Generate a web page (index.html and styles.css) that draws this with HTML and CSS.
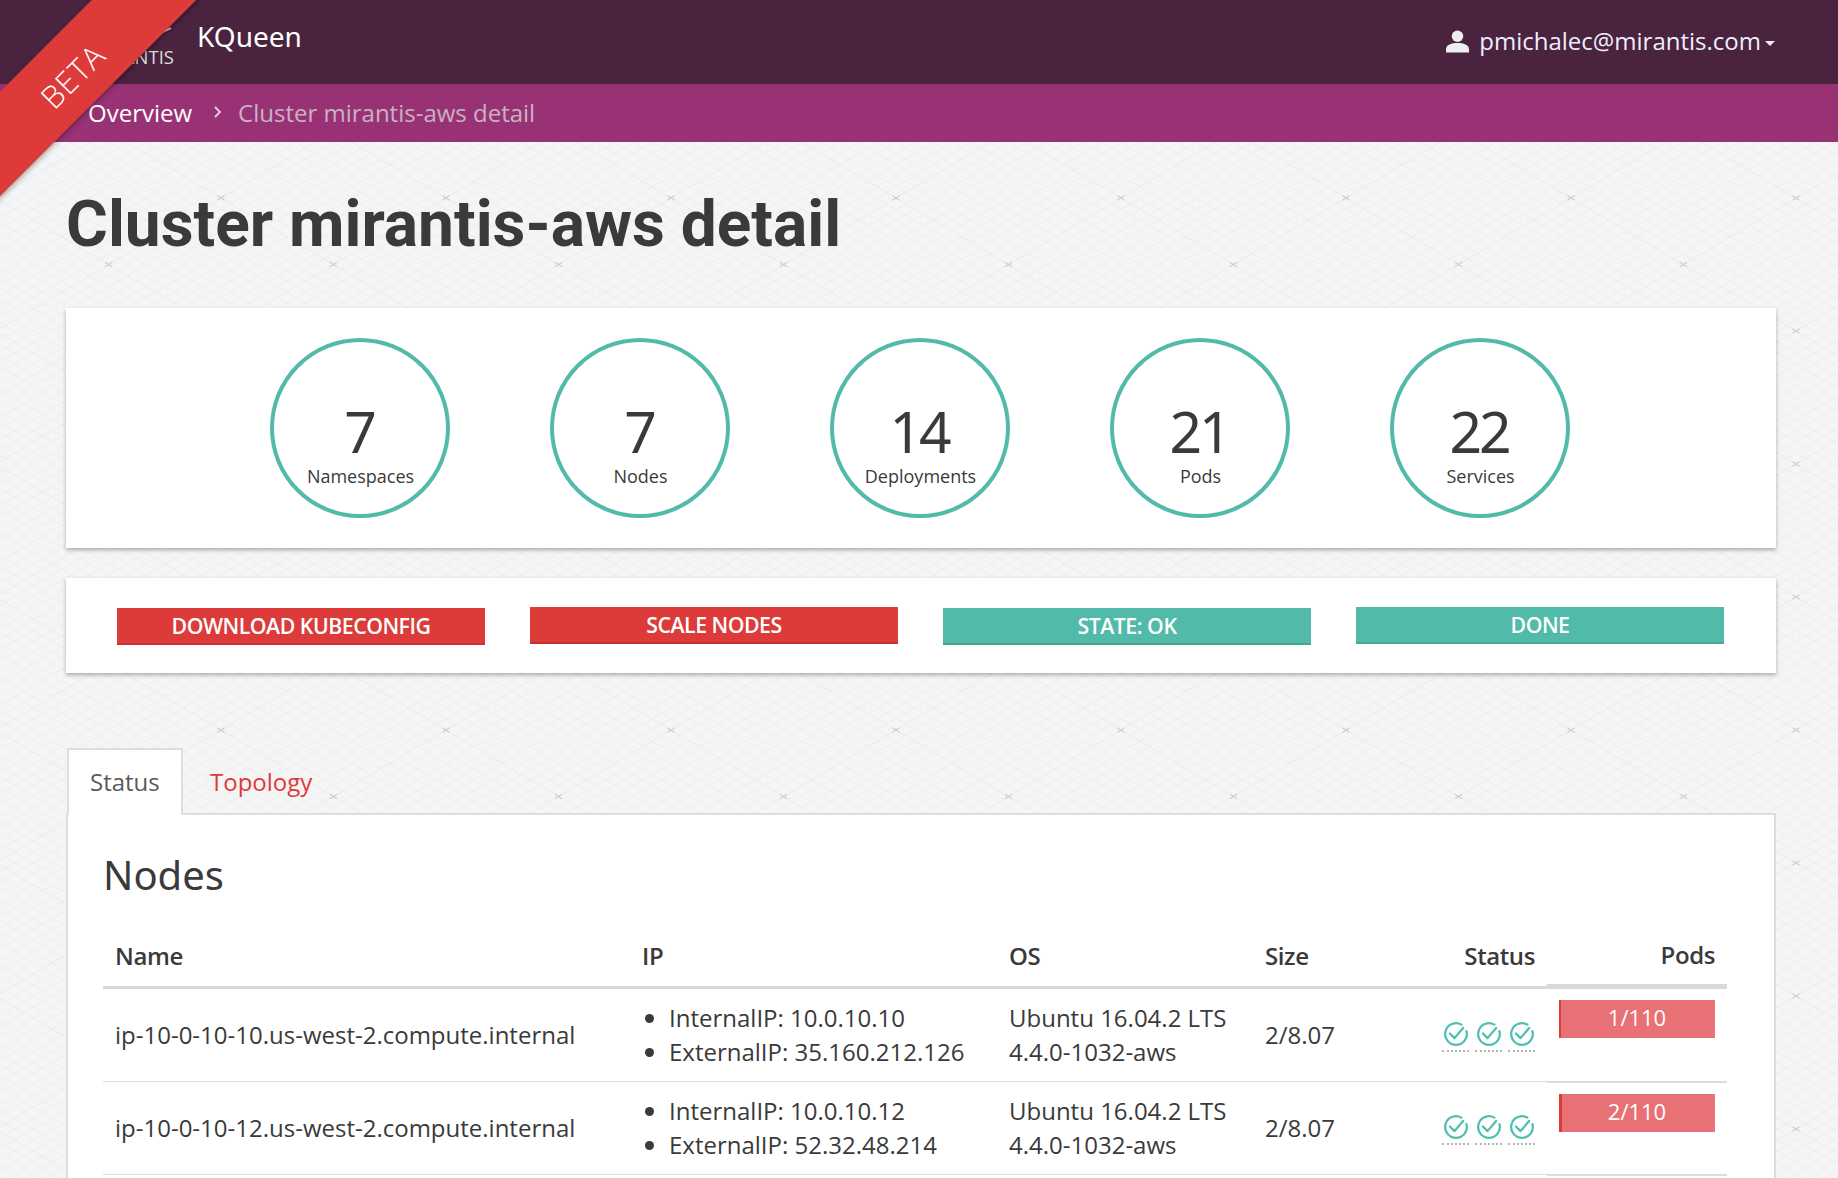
FILE: index.html
```html
<!DOCTYPE html>
<html lang="en">
<head>
<meta charset="utf-8">
<title>KQueen - Cluster mirantis-aws detail</title>
<link rel="stylesheet" href="styles.css">
</head>
<body>
<div class="ribbon"><span>BETA</span></div>
<header class="topbar">
  <a class="logo">
    <svg class="logo-mark" viewBox="0 0 90 30"><path d="M79 17 L87 13" fill="none" stroke="#ddd" stroke-width="1.5"/></svg>
    <span class="logo-text">MIRANTIS</span>
  </a>
  <a class="brand">KQueen</a>
  <div class="user">
    <svg class="user-icon" viewBox="0 0 24 24"><circle cx="12" cy="6.5" r="6"/><path d="M0 23.5 V20 C0 15.5 6 13.6 12 13.6 S24 15.5 24 20 V23.5 Z"/></svg>
    <span>pmichalec@mirantis.com</span>
    <i class="caret"></i>
  </div>
</header>
<nav class="crumbs">
  <a class="crumb-link">Overview</a>
  <svg class="crumb-sep" viewBox="0 0 10 14"><path d="M2 2 L7 7 L2 12" fill="none" stroke="#e6d3e0" stroke-width="1.8"/></svg>
  <span class="crumb-current">Cluster mirantis-aws detail</span>
</nav>
<main class="page">
  <h1 class="title">Cluster mirantis-aws detail</h1>
  <section class="card stats">
    <div class="stat"><strong>7</strong><span>Namespaces</span></div>
    <div class="stat"><strong>7</strong><span>Nodes</span></div>
    <div class="stat"><strong>14</strong><span>Deployments</span></div>
    <div class="stat"><strong>21</strong><span>Pods</span></div>
    <div class="stat"><strong>22</strong><span>Services</span></div>
  </section>
  <section class="card actions">
    <a class="btn btn-red">DOWNLOAD KUBECONFIG</a>
    <a class="btn btn-red btn-up">SCALE NODES</a>
    <a class="btn btn-teal">STATE: OK</a>
    <a class="btn btn-teal btn-up">DONE</a>
  </section>
  <div class="tabs">
    <a class="tab tab-active">Status</a>
    <a class="tab">Topology</a>
  </div>
  <section class="panel">
    <h2 class="panel-title">Nodes</h2>
    <table class="nodes">
      <colgroup>
        <col class="c-name"><col class="c-ip"><col class="c-os"><col class="c-size"><col class="c-status"><col class="c-pods">
      </colgroup>
      <thead>
        <tr><th>Name</th><th>IP</th><th>OS</th><th>Size</th><th class="right">Status</th><th class="right pods-col">Pods</th></tr>
      </thead>
      <tbody>
        <tr>
          <td>ip-10-0-10-10.us-west-2.compute.internal</td>
          <td><ul class="ips"><li>InternalIP: 10.0.10.10</li><li>ExternalIP: 35.160.212.126</li></ul></td>
          <td>Ubuntu 16.04.2 LTS<br>4.4.0-1032-aws</td>
          <td>2/8.07</td>
          <td class="right checks">
            <span class="check"><svg viewBox="-12 -12 24 24"><path d="M5 -8.66 A10 10 0 1 0 9.66 -2.6 M-5.6 -.4 L-1.4 3.8 L6.6 -5.6"/></svg></span>
            <span class="check"><svg viewBox="-12 -12 24 24"><path d="M5 -8.66 A10 10 0 1 0 9.66 -2.6 M-5.6 -.4 L-1.4 3.8 L6.6 -5.6"/></svg></span>
            <span class="check"><svg viewBox="-12 -12 24 24"><path d="M5 -8.66 A10 10 0 1 0 9.66 -2.6 M-5.6 -.4 L-1.4 3.8 L6.6 -5.6"/></svg></span>
          </td>
          <td class="pods-col"><div class="bar"><div class="bar-fill" style="width:1%"></div><span>1/110</span></div></td>
        </tr>
        <tr>
          <td>ip-10-0-10-12.us-west-2.compute.internal</td>
          <td><ul class="ips"><li>InternalIP: 10.0.10.12</li><li>ExternalIP: 52.32.48.214</li></ul></td>
          <td>Ubuntu 16.04.2 LTS<br>4.4.0-1032-aws</td>
          <td>2/8.07</td>
          <td class="right checks">
            <span class="check"><svg viewBox="-12 -12 24 24"><path d="M5 -8.66 A10 10 0 1 0 9.66 -2.6 M-5.6 -.4 L-1.4 3.8 L6.6 -5.6"/></svg></span>
            <span class="check"><svg viewBox="-12 -12 24 24"><path d="M5 -8.66 A10 10 0 1 0 9.66 -2.6 M-5.6 -.4 L-1.4 3.8 L6.6 -5.6"/></svg></span>
            <span class="check"><svg viewBox="-12 -12 24 24"><path d="M5 -8.66 A10 10 0 1 0 9.66 -2.6 M-5.6 -.4 L-1.4 3.8 L6.6 -5.6"/></svg></span>
          </td>
          <td class="pods-col"><div class="bar"><div class="bar-fill" style="width:2%"></div><span>2/110</span></div></td>
        </tr>
        <tr class="row-more"><td></td><td></td><td></td><td></td><td></td><td class="pods-col"></td></tr>
      </tbody>
    </table>
  </section>
</main>
</body>
</html>
```
FILE: styles.css
```css
* { box-sizing: border-box; }
html, body { height: 100%; margin: 0; overflow: hidden; }
body {
  font-family: "Open Sans", "Noto Sans", sans-serif;
  font-size: 24px;
  color: #3a3a3a;
  background-color: #f5f5f5;
  background-image: url("data:image/svg+xml,%3Csvg xmlns='http://www.w3.org/2000/svg' width='225' height='133'%3E%3Cdefs%3E%3Cpattern id='h' width='18.75' height='11.083' patternUnits='userSpaceOnUse'%3E%3Cpath d='M0 0L18.75 11.083M0 11.083L18.75 0' stroke='%23efefef' stroke-width='1' fill='none'/%3E%3C/pattern%3E%3C/defs%3E%3Crect width='225' height='133' fill='url(%23h)'/%3E%3Cpath d='M0 0L225 133M0 133L225 0' stroke='%23ededed' stroke-width='1' fill='none'/%3E%3Cg stroke='%23cfcfcf' stroke-width='1.2' fill='none'%3E%3Cpath d='M-3.5 -2.2L3.5 2.2M-3.5 2.2L3.5 -2.2M221.5 -2.2L228.5 2.2M221.5 2.2L228.5 -2.2M-3.5 130.8L3.5 135.2M-3.5 135.2L3.5 130.8M221.5 130.8L228.5 135.2M221.5 135.2L228.5 130.8M109 64.3L116 68.7M109 68.7L116 64.3'/%3E%3C/g%3E%3C/svg%3E");
  background-position: -4px 65px;
}

.ribbon {
  position: absolute;
  left: -100px;
  top: 35px;
  width: 344px;
  height: 74px;
  background: #dd3a3a;
  color: #fff;
  transform: rotate(-45deg);
  box-shadow: 0 2px 5px rgba(0, 0, 0, .3);
  display: flex;
  align-items: center;
  justify-content: center;
  font-size: 31px;
  font-weight: 300;
  letter-spacing: 1px;
  z-index: 5;
}
.ribbon span { padding: 5px 5px 0 0; }

.topbar {
  height: 84px;
  background: #4a233e;
  color: #eee;
  display: flex;
  align-items: center;
  padding-left: 84px;
  padding-right: 63px;
}
.logo { width: 90px; display: flex; flex-direction: column; align-items: flex-end; }
.logo-mark { width: 90px; height: 30px; display: block; }
.logo-text { font-size: 18.5px; line-height: 24px; color: #ddd; white-space: nowrap; }
.brand {
  margin-left: 23px;
  margin-top: -13px;
  font-family: "Noto Sans", sans-serif;
  font-size: 28px;
  color: #fff;
}
.user { margin-left: auto; display: flex; align-items: center; color: #eef; }
.user-icon { width: 23px; height: 23px; fill: #eee; margin-right: 10px; margin-top: -2px; }
.user span { font-size: 24px; line-height: 30px; margin-top: -3px; }
.caret {
  width: 0; height: 0;
  margin-left: 4px;
  margin-top: 3px;
  border-left: 5.5px solid transparent;
  border-right: 5.5px solid transparent;
  border-top: 5.5px solid #eee;
}

.crumbs {
  height: 58px;
  background: #993275;
  display: flex;
  align-items: center;
  padding-left: 88px;
  padding-bottom: 2px;
}
.crumb-link { color: #fff; }
.crumb-sep { width: 10px; height: 14px; margin: 0 15px 0 21px; }
.crumb-current { color: #c8b2c2; }

.page { padding: 0 62px 0 66px; }
.title {
  margin: 0;
  height: 166px;
  padding-top: 46px;
  font-family: Roboto, sans-serif;
  font-size: 64px;
  line-height: 74px;
  font-weight: 700;
  color: #3a3a3a;
}
.card { background: #fff; box-shadow: 0 2px 4px rgba(0, 0, 0, .3); }
.stats {
  height: 240px;
  padding: 30px 3px 0 0;
  display: flex;
  justify-content: center;
  gap: 100px;
}
.stat {
  width: 180px;
  height: 180px;
  border: 4px solid #52baa9;
  border-radius: 50%;
  display: flex;
  flex-direction: column;
  align-items: center;
  padding: 59px 0 0 2px;
}
.stat strong {
  font-family: "Noto Sans", sans-serif;
  font-weight: 400;
  font-size: 57px;
  line-height: 60px;
  letter-spacing: -3px;
  margin-right: 3px;
}
.stat span { font-size: 18px; line-height: 24px; margin-top: 3px; }

.actions {
  height: 95px;
  margin-top: 30px;
  padding: 30px 0 0 51px;
  display: flex;
  align-items: flex-start;
  gap: 45px;
}
.btn {
  width: 368px;
  height: 37px;
  color: #fff;
  font-size: 21.3px;
  font-weight: 600;
  letter-spacing: -.5px;
  line-height: 35px;
  text-align: center;
}
.btn-up { margin-top: -1px; }
.btn-red { background: #dd3a3a; border-bottom: 2px solid #c92f2f; }
.btn-teal { background: #52baa9; border-bottom: 2px solid #47a596; }

.tabs {
  margin-top: 75px;
  height: 67px;
  display: flex;
  border-bottom: 2px solid #ddd;
}
.tab {
  height: 67px;
  padding: 0 25px;
  border: 2px solid transparent;
  border-bottom: 0;
  line-height: 64px;
  color: #dd3a3a;
}
.tab-active {
  width: 116px;
  padding: 0 21px;
  background: #fff;
  color: #5a5a5a;
  border-color: #ddd;
  margin-left: 1px;
}

.panel {
  background: #fff;
  border-left: 2px solid #ddd;
  border-right: 2px solid #ddd;
  padding: 0 48px 60px 35px;
}
.panel-title {
  margin: 0;
  height: 98px;
  padding-top: 34px;
  font-family: "Noto Sans", sans-serif;
  font-weight: 400;
  font-size: 40px;
  line-height: 52px;
}

.nodes { width: 100%; table-layout: fixed; border-collapse: separate; border-spacing: 0; }
.c-name { width: 527px; }
.c-ip { width: 367px; }
.c-os { width: 256px; }
.c-size { width: 147px; }
.c-status { width: 147px; }
.c-pods { width: 180px; }
.nodes th {
  height: 76px;
  padding: 0 12px 13px;
  text-align: left;
  font-weight: 600;
  vertical-align: bottom;
  line-height: 34px;
  letter-spacing: -.4px;
  border-bottom: 3px solid #d9d9d9;
}
.nodes th.right, .nodes td.right { text-align: right; }
.nodes th.pods-col { border-bottom-width: 5px; padding-bottom: 12px; }
.nodes td {
  height: 93px;
  padding: 0 12px;
  line-height: 34px;
  vertical-align: middle;
  border-top: 1px solid #dcdcdc;
}
.nodes tbody tr:first-child td { height: 92px; border-top: 0; }
.nodes td.pods-col { border-top-width: 2px; vertical-align: top; padding-top: 11px; }
.nodes tbody tr:first-child td.pods-col { padding-top: 11px; }
.row-more td { height: 120px; }
.ips { margin: 0; padding: 0 0 0 27px; }
.ips li { line-height: 34px; }
.checks { font-size: 0; white-space: nowrap; }
.check {
  display: inline-block;
  width: 27px;
  height: 31px;
  margin-left: 6px;
  margin-top: 2px;
  border-bottom: 2px dotted #b5b5b5;
  text-align: center;
  vertical-align: middle;
}
.check svg { width: 26px; height: 26px; display: inline-block; fill: none; stroke: #4fbfb3; stroke-width: 2.1; stroke-linecap: round; stroke-linejoin: round; }
.bar {
  position: relative;
  height: 38px;
  background: #e87176;
  color: #fff;
  text-align: center;
  line-height: 34px;
  font-size: 22px;
}
.bar span { position: relative; }
.bar-fill { position: absolute; left: 0; top: 0; bottom: 0; background: #dd3a3a; }
```
